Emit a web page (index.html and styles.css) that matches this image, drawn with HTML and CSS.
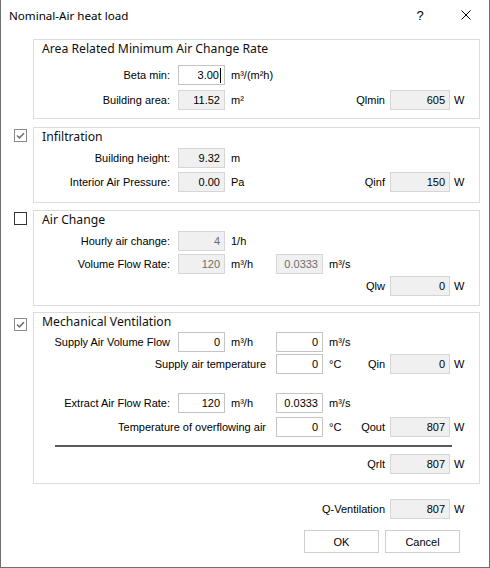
FILE: index.html
```html
<!DOCTYPE html>
<html lang="en">
<head>
<meta charset="utf-8">
<title>Nominal-Air heat load</title>
<link rel="stylesheet" href="styles.css">
</head>
<body>
<div class="window">
  <header class="titlebar">
    <span class="title">Nominal-Air heat load</span>
    <span class="cap help">?</span>
    <span class="cap close">
      <svg width="10" height="10" viewBox="0 0 10 10"><path d="M0.5 0.5 L9.5 9.5 M9.5 0.5 L0.5 9.5" stroke="#000" stroke-width="1" fill="none"/></svg>
    </span>
  </header>

  <main class="content">
    <!-- Area related minimum air change rate -->
    <section class="group">
      <span class="check-slot"></span>
      <div class="box g1">
        <div class="gtitle">Area Related Minimum Air Change Rate</div>
        <div class="row mt7">
          <span class="lbl c1">Beta min:</span>
          <span class="field edit c2">3.00<i class="caret"></i></span>
          <span class="unit c3">m³/(m²h)</span>
        </div>
        <div class="row mt5">
          <span class="lbl c1">Building area:</span>
          <span class="field ro c2">11.52</span>
          <span class="unit c3">m²</span>
          <span class="qlbl">Qlmin</span>
          <span class="field ro qbox">605</span>
          <span class="w">W</span>
        </div>
      </div>
    </section>

    <!-- Infiltration -->
    <section class="group gap8">
      <span class="check checked mt2"><svg width="9" height="7" viewBox="0 0 9 7"><path d="M1 3.5 L3.4 5.8 L8 1.2" stroke="#707070" stroke-width="1.6" fill="none"/></svg></span>
      <div class="box g2">
        <div class="gtitle">Infiltration</div>
        <div class="row mt2">
          <span class="lbl c1">Building height:</span>
          <span class="field ro c2">9.32</span>
          <span class="unit c3">m</span>
        </div>
        <div class="row mt4">
          <span class="lbl c1">Interior Air Pressure:</span>
          <span class="field ro c2">0.00</span>
          <span class="unit c3">Pa</span>
          <span class="qlbl">Qinf</span>
          <span class="field ro qbox">150</span>
          <span class="w">W</span>
        </div>
      </div>
    </section>

    <!-- Air change -->
    <section class="group gap7">
      <span class="check mt2"></span>
      <div class="box g3">
        <div class="gtitle">Air Change</div>
        <div class="row mt2">
          <span class="lbl c1">Hourly air change:</span>
          <span class="field ro off c2">4</span>
          <span class="unit c3">1/h</span>
        </div>
        <div class="row mt3">
          <span class="lbl c1">Volume Flow Rate:</span>
          <span class="field ro off c2">120</span>
          <span class="unit c3">m³/h</span>
          <span class="field ro off c4">0.0333</span>
          <span class="unit c5">m³/s</span>
        </div>
        <div class="row mt2">
          <span class="qlbl">Qlw</span>
          <span class="field ro qbox">0</span>
          <span class="w">W</span>
        </div>
      </div>
    </section>

    <!-- Mechanical ventilation -->
    <section class="group gap6">
      <span class="check checked mt6"><svg width="9" height="7" viewBox="0 0 9 7"><path d="M1 3.5 L3.4 5.8 L8 1.2" stroke="#707070" stroke-width="1.6" fill="none"/></svg></span>
      <div class="box g4">
        <div class="gtitle">Mechanical Ventilation</div>
        <div class="row mt1">
          <span class="lbl c1">Supply Air Volume Flow</span>
          <span class="field edit c2">0</span>
          <span class="unit c3">m³/h</span>
          <span class="field edit c4">0</span>
          <span class="unit c5">m³/s</span>
        </div>
        <div class="row mt2">
          <span class="lbl wide">Supply air temperature</span>
          <span class="field edit c4">0</span>
          <span class="unit c5">°C</span>
          <span class="qlbl">Qin</span>
          <span class="field ro qbox">0</span>
          <span class="w">W</span>
        </div>
        <div class="row mt19">
          <span class="lbl c1">Extract Air Flow Rate:</span>
          <span class="field edit c2">120</span>
          <span class="unit c3">m³/h</span>
          <span class="field edit c4">0.0333</span>
          <span class="unit c5">m³/s</span>
        </div>
        <div class="row mt4">
          <span class="lbl wide">Temperature of overflowing air</span>
          <span class="field edit c4">0</span>
          <span class="unit c5">°C</span>
          <span class="qlbl">Qout</span>
          <span class="field ro qbox">807</span>
          <span class="w">W</span>
        </div>
        <hr class="sum-line">
        <div class="row">
          <span class="qlbl">Qrlt</span>
          <span class="field ro qbox">807</span>
          <span class="w">W</span>
        </div>
      </div>
    </section>

    <div class="total">
      <div class="row">
        <span class="qlbl total-lbl">Q-Ventilation</span>
        <span class="field ro qbox">807</span>
        <span class="w">W</span>
      </div>
    </div>

    <div class="actions">
      <button class="btn" type="button">OK</button>
      <button class="btn" type="button">Cancel</button>
    </div>
  </main>
</div>
</body>
</html>
```
FILE: styles.css
```css
* { box-sizing: border-box; }

html, body {
  margin: 0;
  background: #ffffff;
}

body {
  font-family: "Liberation Sans", Arial, sans-serif;
  font-size: 11px;
  color: #000;
}

.window {
  width: 490px;
  height: 568px;
  background: #ffffff;
  border-left: 1px solid #6f6f6f;
  border-right: 1px solid #6f6f6f;
  border-bottom: 1px solid #6f6f6f;
  display: flex;
  flex-direction: column;
}

/* caption bar */
.titlebar {
  height: 30px;
  display: flex;
  align-items: center;
}

.title {
  font-family: "Noto Sans", sans-serif;
  font-size: 11.6px;
  padding-left: 8px;
  flex: 1;
}

.cap {
  width: 46px;
  height: 30px;
  display: flex;
  align-items: center;
  justify-content: center;
}

.help {
  font-family: "Liberation Sans", sans-serif;
  font-size: 13px;
  padding-top: 1px;
}

.close svg { display: block; }

/* dialog body */
.content {
  padding: 9px 0 0 13px;
  flex: 1;
}

.group {
  display: flex;
  align-items: flex-start;
}

.gap8 { margin-top: 8px; }
.gap7 { margin-top: 7px; }
.gap6 { margin-top: 6px; }

.check-slot { width: 19px; flex: none; }

.check {
  width: 13px;
  height: 13px;
  border: 1px solid #333333;
  margin-right: 6px;
  flex: none;
  display: flex;
  align-items: center;
  justify-content: center;
}

.check.checked { border-color: #8a8a8a; }
.check svg { display: block; }

.box {
  width: 447px;
  border: 1px solid #dcdcdc;
}

.g1 { padding-bottom: 8px; }
.g2 { padding-bottom: 10px; }
.g3 { padding-bottom: 9px; }
.g4 { padding-bottom: 9px; }

.gtitle {
  font-family: "Noto Sans", sans-serif;
  font-size: 12.2px;
  line-height: 18px;
  height: 18px;
  padding-left: 8px;
  color: #101010;
}

/* one form line: label | value | unit | value | unit | Q label | Q value | W */
.row {
  display: grid;
  grid-template-columns: 144px 47px 51px 47px 27px 40px 60px 28px;
  height: 20px;
  align-items: center;
}

.mt1 { margin-top: 1px; }
.mt2 { margin-top: 2px; }
.mt3 { margin-top: 3px; }
.mt4 { margin-top: 4px; }
.mt5 { margin-top: 5px; }
.mt6 { margin-top: 6px; }
.mt7 { margin-top: 7px; }
.mt19 { margin-top: 19px; }

.c1 { grid-column: 1; }
.c2 { grid-column: 2; }
.c3 { grid-column: 3; }
.c4 { grid-column: 4; }
.c5 { grid-column: 5; }

.lbl {
  text-align: right;
  padding-right: 8px;
  white-space: nowrap;
}

.lbl.wide {
  grid-column: 1 / 4;
  padding-right: 10px;
}

.unit {
  padding-left: 6px;
  white-space: nowrap;
}

.qlbl {
  grid-column: 6;
  text-align: right;
  padding-right: 5px;
  white-space: nowrap;
}

.qbox { grid-column: 7; }

.w {
  grid-column: 8;
  padding-left: 4px;
}

.field {
  height: 20px;
  border: 1px solid #cccccc;
  display: flex;
  align-items: center;
  justify-content: flex-end;
  padding-right: 4px;
  white-space: nowrap;
}

.field.edit { background: #ffffff; border-color: #c4c4c4; }
.field.ro { background: #f0f0f0; border-color: #d6d6d6; }
.field.off { color: #6d6d6d; }

.caret {
  display: inline-block;
  width: 1px;
  height: 15px;
  background: #000;
  margin-left: 1px;
  margin-right: -1px;
}

.sum-line {
  margin: 8px 0 0 21px;
  width: 397px;
  height: 2px;
  border: none;
  background: #5a5a5a;
}

.g4 .sum-line + .row { margin-top: 7px; }

/* totals line below the groups */
.total {
  margin-top: 15px;
  padding-left: 20px;
}

.total-lbl {
  grid-column: 4 / 7;
}

.actions {
  margin-top: 11px;
  display: flex;
  justify-content: flex-end;
  gap: 6px;
  padding-right: 29px;
}

.btn {
  width: 75px;
  height: 23px;
  background: #ffffff;
  border: 1px solid #cfcfcf;
  font-family: "Liberation Sans", Arial, sans-serif;
  font-size: 11px;
  color: #000;
  padding: 0;
}
```
